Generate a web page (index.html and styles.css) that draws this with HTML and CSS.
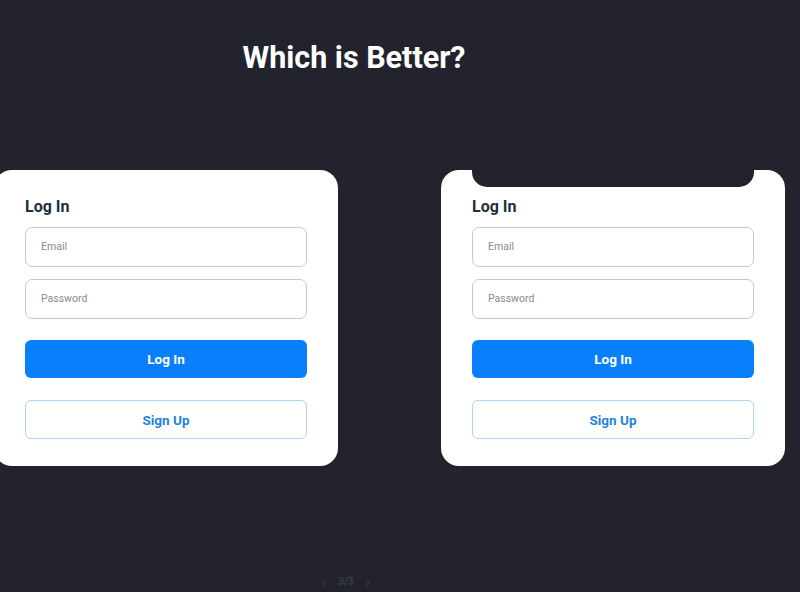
FILE: index.html
```html
<!DOCTYPE html>
<html>
<head>
<meta charset="utf-8">
<link rel="stylesheet" href="styles.css">
</head>
<body>
<div class="page">
  <h1 class="title">Which is Better?</h1>
  <div class="cards">
    <div class="card">
      <div class="card-title">Log In</div>
      <div class="field">Email</div>
      <div class="field field-gap">Password</div>
      <div class="btn btn-primary">Log In</div>
      <div class="btn btn-outline">Sign Up</div>
    </div>
    <div class="card card-notch">
      <div class="notch"></div>
      <div class="card-title">Log In</div>
      <div class="field">Email</div>
      <div class="field field-gap">Password</div>
      <div class="btn btn-primary">Log In</div>
      <div class="btn btn-outline">Sign Up</div>
    </div>
  </div>
  <div class="pager">
    <span class="chev">&#8249;</span>
    <span class="count">3/3</span>
    <span class="chev">&#8250;</span>
  </div>
</div>
</body>
</html>
```
FILE: styles.css
```css
html, body {
  margin: 0;
  padding: 0;
  background: #22232d;
}
body {
  font-family: Roboto, "Liberation Sans", sans-serif;
  width: 800px;
  height: 592px;
  overflow: hidden;
}
.page {
  display: flex;
  flex-direction: column;
}
.title {
  margin: 40px 0 0 0;
  width: 708px;
  text-align: center;
  font-size: 30.5px;
  line-height: 36px;
  font-weight: 700;
  color: #ffffff;
}
.cards {
  display: flex;
  gap: 103px;
  margin-top: 94px;
  margin-left: -6px;
}
.card {
  position: relative;
  width: 344px;
  height: 296px;
  box-sizing: border-box;
  background: #ffffff;
  border-radius: 18px;
  padding: 27px 31px 27px 31px;
  display: flex;
  flex-direction: column;
}
.notch {
  position: absolute;
  top: 0;
  left: 31px;
  right: 31px;
  height: 17px;
  background: #22232d;
  border-radius: 0 0 15px 15px;
}
.card-title {
  font-size: 16px;
  line-height: 20px;
  font-weight: 700;
  color: #1e2f3d;
  margin-bottom: 10px;
}
.field {
  height: 40px;
  box-sizing: border-box;
  border: 1px solid #c9c9cc;
  border-radius: 7px;
  padding-left: 15px;
  display: flex;
  align-items: center;
  font-size: 10.5px;
  color: #8a8a8e;
}
.field-gap {
  margin-top: 12px;
}
.btn {
  height: 39px;
  box-sizing: border-box;
  border-radius: 6px;
  display: flex;
  align-items: center;
  justify-content: center;
  font-size: 13.5px;
  font-weight: 700;
}
.btn-primary {
  margin-top: 21px;
  background: #0a7ffc;
  color: #ffffff;
}
.btn-outline {
  margin-top: 22px;
  border: 1px solid #aed3f3;
  color: #1f83dc;
  background: #ffffff;
}
.pager {
  margin-top: 109px;
  margin-left: 322px;
  display: flex;
  align-items: center;
  gap: 12px;
  font-size: 10px;
  line-height: 14px;
  color: #3b3c4a;
  font-weight: 700;
}
.chev {
  font-size: 14px;
  font-weight: 400;
}
```
